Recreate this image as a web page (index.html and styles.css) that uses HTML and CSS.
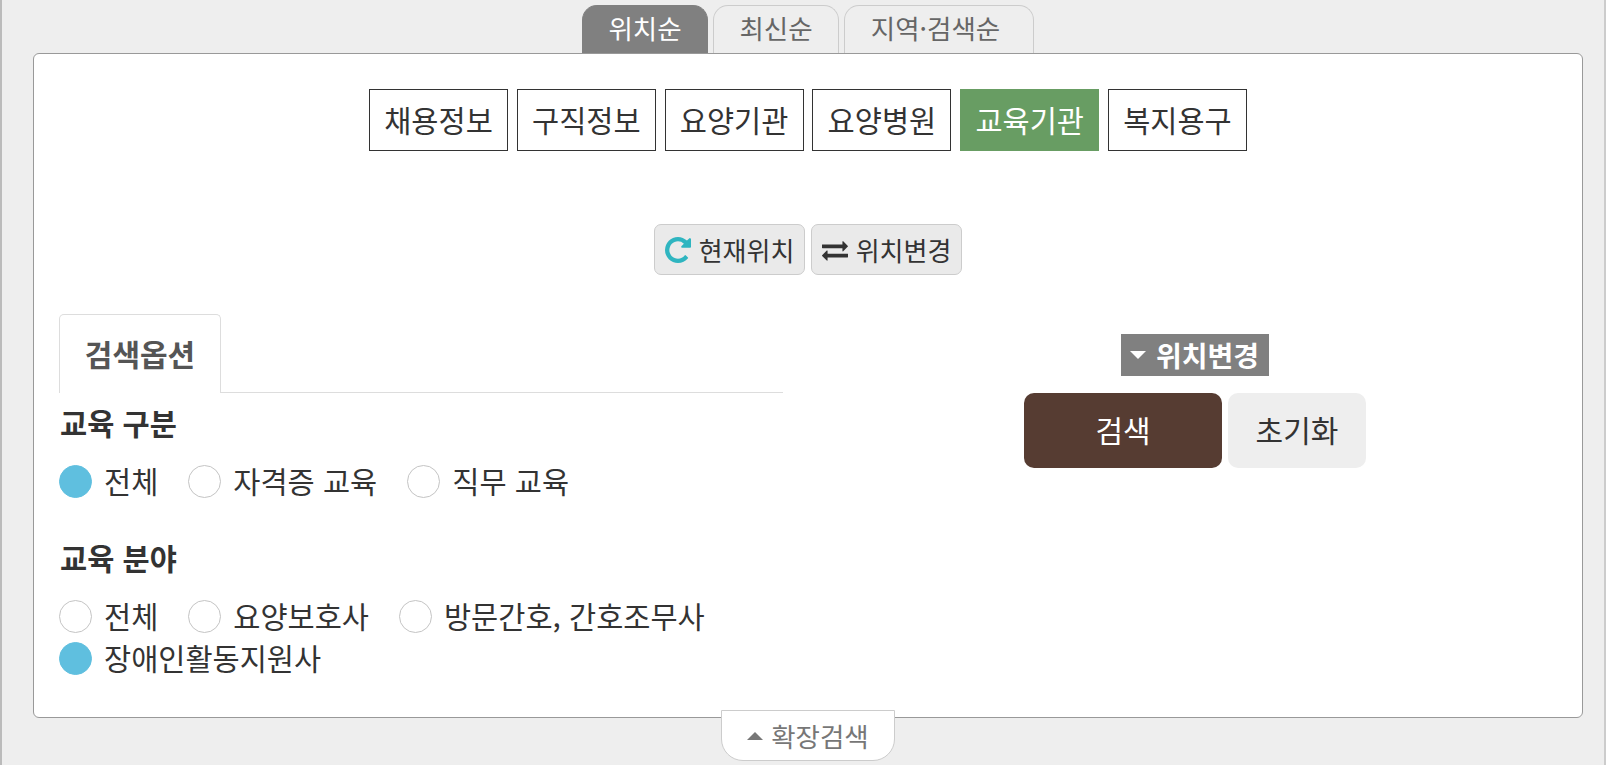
FILE: index.html
```html
<!DOCTYPE html>
<html lang="ko">
<head>
<meta charset="utf-8">
<title>교육기관 검색</title>
<link rel="stylesheet" href="styles.css">
</head>
<body>
<div class="page">
  <div class="sort-tabs">
    <a class="sort-tab active">위치순</a>
    <a class="sort-tab">최신순</a>
    <a class="sort-tab wide">지역·검색순</a>
  </div>
  <div class="card">
    <div class="cats">
      <a class="cat">채용정보</a>
      <a class="cat">구직정보</a>
      <a class="cat">요양기관</a>
      <a class="cat">요양병원</a>
      <a class="cat on">교육기관</a>
      <a class="cat">복지용구</a>
    </div>
    <div class="locs">
      <a class="loc">
        <svg class="ico ico-teal" viewBox="128 128 1536 1536"><path d="M1664 256v448q0 26-19 45t-45 19h-448q-42 0-59-40-17-39 14-69l138-138q-148-137-349-137-104 0-198.5 40.5t-163.5 109.5-109.5 163.5-40.5 198.5 40.5 198.5 109.5 163.5 163.5 109.5 198.5 40.5q119 0 225-52t179-147q7-10 23-12 15 0 25 9l137 138q9 8 9.5 20.5t-7.5 22.5q-109 132-264 204.5t-327 72.5q-156 0-298-61t-245-164-164-245-61-298 61-298 164-245 245-164 298-61q147 0 284.5 55.5t244.5 156.5l130-129q29-31 70-14 39 17 39 59z"/></svg>
        현재위치
      </a>
      <a class="loc">
        <svg class="ico ico-dark" viewBox="0 128 1792 1536"><path d="M1792 1184v192q0 13-9.5 22.5t-22.5 9.5h-1376v192q0 13-9.5 22.5t-22.5 9.5q-12 0-24-10l-319-320q-9-9-9-22 0-14 9-23l320-320q9-9 23-9 13 0 22.5 9.5t9.5 22.5v192h1376q13 0 22.5 9.5t9.5 22.5zm0-544q0 14-9 23l-320 320q-9 9-23 9-13 0-22.5-9.5t-9.5-22.5v-192h-1376q-13 0-22.5-9.5t-9.5-22.5v-192q0-13 9.5-22.5t22.5-9.5h1376v-192q0-14 9-23t23-9q12 0 24 10l319 319q9 9 9 23z"/></svg>
        위치변경
      </a>
    </div>
    <div class="cols">
      <div class="left">
        <div class="opt-head"><span class="opt-tab">검색옵션</span></div>
        <div class="group-title first">교육 구분</div>
        <div class="radios">
          <label class="radio"><i class="dot on"></i><span class="lbl">전체</span></label>
          <label class="radio"><i class="dot"></i><span class="lbl">자격증 교육</span></label>
          <label class="radio"><i class="dot"></i><span class="lbl">직무 교육</span></label>
        </div>
        <div class="group-title second">교육 분야</div>
        <div class="radios">
          <label class="radio"><i class="dot"></i><span class="lbl">전체</span></label>
          <label class="radio"><i class="dot"></i><span class="lbl">요양보호사</span></label>
          <label class="radio"><i class="dot"></i><span class="lbl">방문간호, 간호조무사</span></label>
          <label class="radio"><i class="dot on"></i><span class="lbl">장애인활동지원사</span></label>
        </div>
      </div>
      <div class="right">
        <div class="change"><i class="caret-down"></i>위치변경</div>
        <div class="actions">
          <a class="btn-search">검색</a>
          <a class="btn-reset">초기화</a>
        </div>
      </div>
    </div>
  </div>
  <div class="more-wrap">
    <a class="more"><i class="caret-up"></i>확장검색</a>
  </div>
</div>
</body>
</html>
```
FILE: styles.css
```css
* { box-sizing: border-box; }
html, body { margin: 0; height: 100%; overflow: hidden; }
body {
  font-family: "Noto Sans CJK KR", "Noto Sans", sans-serif;
  color: #333;
  background: #eee;
}
.page {
  height: 765px;
  padding: 5px 21px 0 31px;
  border-left: 2px solid #bbb;
  border-right: 2px solid #ccc;
}
.sort-tabs {
  display: flex;
  justify-content: center;
  gap: 5px;
  height: 48px;
}
.sort-tab {
  width: 126px;
  height: 48px;
  border: 1px solid #ccc;
  border-bottom: 0;
  border-radius: 15px 15px 0 0;
  font-size: 26.5px;
  line-height: 44px;
  text-align: center;
  color: #666;
}
.sort-tab.wide { width: 190px; padding-right: 7px; }
.sort-tab.active {
  background: #808080;
  border-color: #808080;
  color: #fff;
}
.card {
  height: 665px;
  padding-top: 35px;
  background: #fff;
  border: 1px solid #999;
  border-radius: 6px;
}
.cats {
  display: flex;
  justify-content: center;
  gap: 8.8px;
  height: 62px;
}
.cat {
  width: 139px;
  height: 62px;
  border: 1px solid #333;
  font-size: 29.5px;
  line-height: 58px;
  text-align: center;
  color: #333;
}
.cat.on {
  background: #689d63;
  border-color: #689d63;
  color: #fff;
}
.locs {
  display: flex;
  justify-content: center;
  gap: 6px;
  margin-top: 73px;
}
.loc {
  display: flex;
  align-items: center;
  justify-content: center;
  gap: 8px;
  width: 151px;
  height: 51px;
  background: #eaeaea;
  border: 1px solid #ccc;
  border-radius: 7px;
  font-size: 26px;
  color: #333;
}
.ico { width: 26px; height: 26px; flex: none; }
.ico-teal { fill: #2fb5c0; }
.ico-dark { fill: #333; }
.cols {
  display: flex;
  margin-top: 39px;
}
.left {
  width: 724px;
  margin-left: 25px;
  flex: none;
}
.opt-head {
  height: 79px;
  border-bottom: 1px solid #ddd;
}
.opt-tab {
  display: block;
  width: 162px;
  height: 79px;
  background: #fff;
  border: 1px solid #ddd;
  border-bottom: 0;
  border-radius: 5px 5px 0 0;
  font-size: 30px;
  font-weight: 700;
  line-height: 76px;
  text-align: center;
  color: #555;
}
.group-title {
  height: 34px;
  padding-left: 1px;
  font-size: 29.5px;
  font-weight: 700;
  line-height: 32px;
  color: #333;
}
.group-title.first { margin-top: 13px; margin-bottom: 25px; }
.group-title.second { margin-top: 43px; margin-bottom: 25px; }
.radios {
  display: flex;
  flex-wrap: wrap;
  row-gap: 9px;
  column-gap: 30px;
}
.radio {
  display: flex;
  align-items: center;
  gap: 12px;
  height: 33px;
  font-size: 29.5px;
  color: #333;
}
.lbl { margin-bottom: 4px; }
.dot {
  width: 33px;
  height: 33px;
  flex: none;
  background: #fff;
  border: 1px solid #c4c4c4;
  border-radius: 50%;
}
.dot.on {
  background: #5fbfdf;
  border-color: #5fbfdf;
}
.right {
  flex: 1;
  display: flex;
  flex-direction: column;
  align-items: center;
  padding-top: 20px;
  padding-left: 25px;
}
.change {
  display: flex;
  align-items: center;
  gap: 10px;
  height: 42px;
  padding: 0 10px 0 9px;
  background: #808080;
  color: #fff;
  font-size: 28px;
  font-weight: 700;
}
.caret-down {
  width: 0;
  height: 0;
  border: 8px solid transparent;
  border-top-color: #fff;
  border-bottom: 0;
}
.actions {
  display: flex;
  gap: 6px;
  margin-top: 17px;
}
.btn-search, .btn-reset {
  height: 75px;
  border-radius: 10px;
  font-size: 30px;
  line-height: 73px;
  text-align: center;
}
.btn-search { width: 198px; background: #563c32; color: #fff; }
.btn-reset { width: 138px; background: #eee; color: #333; }
.more-wrap {
  display: flex;
  justify-content: center;
  margin-top: -8px;
}
.more {
  display: flex;
  align-items: center;
  justify-content: center;
  gap: 8px;
  width: 174px;
  height: 51px;
  background: #fff;
  border: 1px solid #ccc;
  border-radius: 0 0 22px 22px;
  font-size: 26.5px;
  color: #777;
}
.caret-up {
  width: 0;
  height: 0;
  border: 8px solid transparent;
  border-bottom-color: #777;
  border-top: 0;
}
```
